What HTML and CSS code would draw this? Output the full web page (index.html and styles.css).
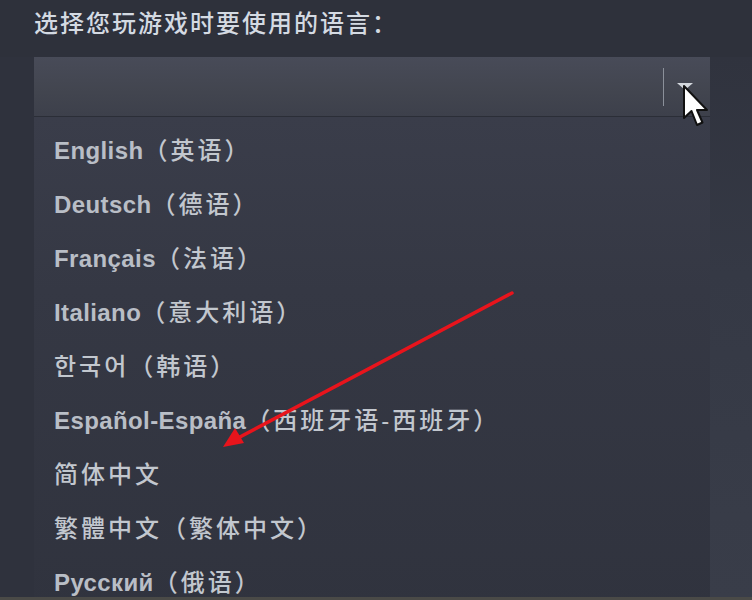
FILE: index.html
```html
<!DOCTYPE html>
<html lang="zh-CN">
<head>
<meta charset="utf-8">
<link rel="stylesheet" href="styles.css">
</head>
<body>
<div class="page">
  <div class="panel">
    <div class="label">选择您玩游戏时要使用的语言：</div>
    <div class="select">
      <span class="divider"></span>
      <span class="caret"></span>
    </div>
    <ul class="list">
      <li><span class="lat">English</span><span class="cjk">（英语）</span></li>
      <li><span class="lat">Deutsch</span><span class="cjk">（德语）</span></li>
      <li><span class="lat">Français</span><span class="cjk">（法语）</span></li>
      <li><span class="lat">Italiano</span><span class="cjk">（意大利语）</span></li>
      <li><span class="cjk">한국어（韩语）</span></li>
      <li><span class="lat">Español-España</span><span class="cjk">（西班牙语-西班牙）</span></li>
      <li><span class="cjk">简体中文</span></li>
      <li><span class="cjk">繁體中文（繁体中文）</span></li>
      <li><span class="lat">Русский</span><span class="cjk">（俄语）</span></li>
    </ul>
  </div>
  <div class="side"></div>
  <svg class="annot" width="752" height="600" viewBox="0 0 752 600">
    <line x1="512" y1="293" x2="238" y2="438" stroke="#e8141c" stroke-width="3.5" stroke-linecap="round"/>
    <polygon points="223,447 235,428 244,443" fill="#e8141c"/>
  </svg>
  <svg class="cursor" width="34" height="50" viewBox="0 0 34 50">
    <path d="M2 2 L2 34 L9.5 27 L15 41 L20.5 38.5 L15 26 L25 26 Z" fill="#ffffff" stroke="#111111" stroke-width="2" stroke-linejoin="round"/>
  </svg>
</div>
<div class="bottom"></div>
</body>
</html>
```
FILE: styles.css
```css
html, body {
  margin: 0;
  padding: 0;
}
body {
  width: 752px;
  height: 600px;
  overflow: hidden;
  background: #2f323d;
  font-family: "Liberation Sans", "Noto Sans CJK SC", sans-serif;
}
.page {
  position: relative;
  display: flex;
  height: 597px;
  overflow: hidden;
  padding-left: 34px;
  box-sizing: border-box;
}
.panel {
  width: 676px;
  display: flex;
  flex-direction: column;
}
.side {
  flex: 1;
  margin-top: 57px;
  background: linear-gradient(180deg, #30333e 0%, #353945 40%, #393d49 100%);
}
.label {
  flex-shrink: 0;
  height: 57px;
  box-sizing: border-box;
  padding-top: 11px;
  margin-left: -34px;
  padding-left: 34px;
  width: 752px;
  font-size: 24px;
  line-height: 26px;
  letter-spacing: 2px;
  font-weight: 500;
  color: #d4dae2;
  background: #2e313b;
}
.select {
  flex-shrink: 0;
  height: 59px;
  background: linear-gradient(180deg, #484b58 0%, #42454f 60%, #3d404b 100%);
  border-bottom: 1px solid #2b2e37;
  display: flex;
  align-items: center;
  justify-content: flex-end;
  padding-right: 17px;
  gap: 13px;
}
.divider {
  width: 1px;
  height: 38px;
  background: #8b909a;
}
.caret {
  width: 0;
  height: 0;
  border-left: 8px solid transparent;
  border-right: 8px solid transparent;
  border-top: 7px solid #d3d7dd;
  margin-top: 0;
}
.list {
  flex-shrink: 0;
  list-style: none;
  margin: 0;
  padding: 7px 0 0 20px;
  height: 490px;
  background: linear-gradient(180deg, #3a3d4a 0%, #353844 35%, #30333e 100%);
}
.list li {
  height: 54px;
  line-height: 54px;
  font-size: 24px;
  color: #c2c7ce;
  white-space: nowrap;
}
.lat {
  font-weight: 700;
  letter-spacing: 0.4px;
  color: #b9bec6;
}
.cjk {
  font-weight: 500;
  letter-spacing: 3px;
}
.annot {
  position: absolute;
  left: 0;
  top: 0;
  pointer-events: none;
}
.cursor {
  position: absolute;
  left: 682px;
  top: 84px;
}
.bottom {
  height: 3px;
  background: #4a4a47;
}
```
